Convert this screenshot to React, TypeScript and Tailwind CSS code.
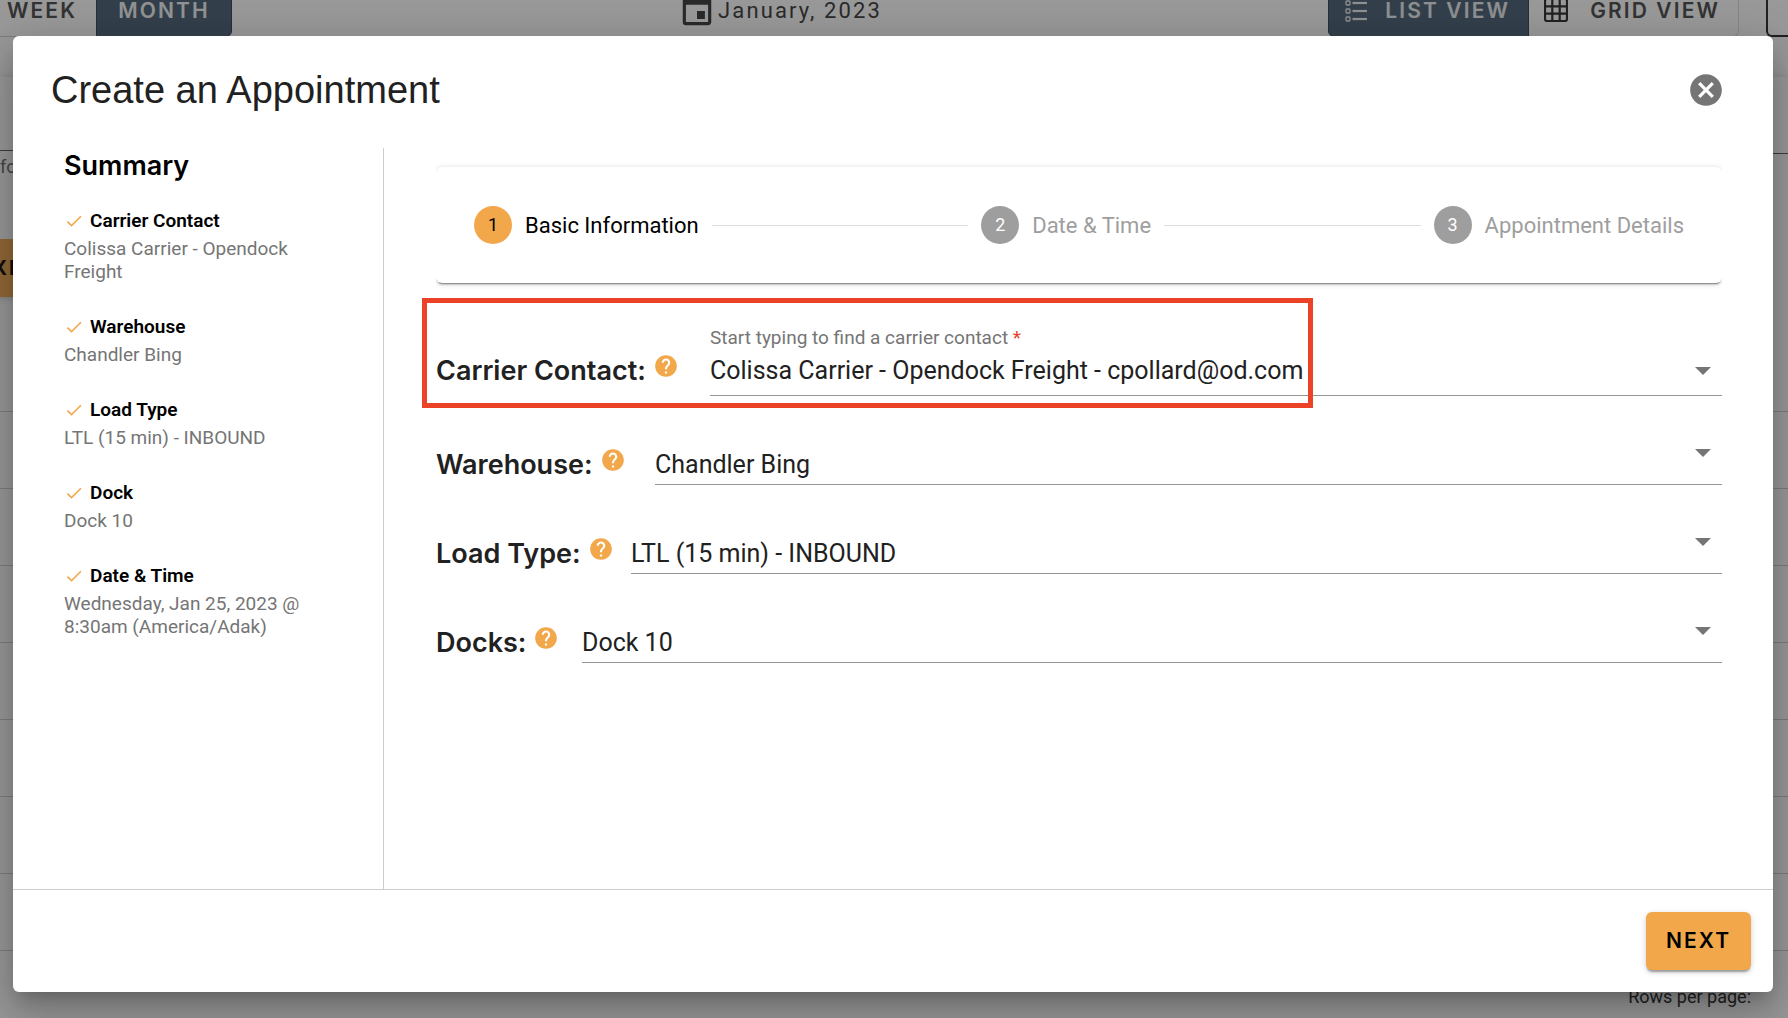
import React from "react";
import { MdCancel, MdCheck, MdEvent, MdHelp } from "react-icons/md";

const summary = [
  { title: "Carrier Contact", value: "Colissa Carrier - Opendock Freight" },
  { title: "Warehouse", value: "Chandler Bing" },
  { title: "Load Type", value: "LTL (15 min) - INBOUND" },
  { title: "Dock", value: "Dock 10" },
  { title: "Date & Time", value: "Wednesday, Jan 25, 2023 @ 8:30am (America/Adak)" },
];

const steps = ["Basic Information", "Date & Time", "Appointment Details"];

const selects = [
  { id: "warehouse", label: "Warehouse:", value: "Chandler Bing", width: "w-[219px]" },
  { id: "load-type", label: "Load Type:", value: "LTL (15 min) - INBOUND", width: "w-[195px]" },
  { id: "docks", label: "Docks:", value: "Dock 10", width: "w-[146px]" },
];

function ListIcon() {
  return (
    <svg viewBox="0 0 22 22" className="size-[22px]" fill="none" stroke="currentColor">
      {[3, 11, 19].map((y) => (
        <g key={y}>
          <rect x="1" y={y - 2} width="4" height="4" rx="1" strokeWidth="1.3" />
          <path d={`M7.500 ${y}H22`} strokeWidth="2.200" />
        </g>
      ))}
    </svg>
  );
}

function GridIcon() {
  return (
    <svg viewBox="0 0 24 24" className="size-6 text-[#222]" fill="none" stroke="currentColor" strokeWidth="2.200">
      <rect x="1" y="1" width="22" height="22" rx="2" />
      <path d="M8.300 1v22M15.700 1v22M1 8.300h22M1 15.700h22" />
    </svg>
  );
}

function Caret() {
  return (
    <svg viewBox="0 0 16 8" className="pointer-events-none mr-[11px] h-2 w-4 shrink-0" fill="#757575">
      <path d="M0 0h16L8 8z" />
    </svg>
  );
}

function FieldLabel({ id, label, width }: { id: string; label: string; width: string }) {
  return (
    <div className={`flex shrink-0 items-start gap-[7px] pb-0.5 ${width}`}>
      <label
        htmlFor={id}
        className="font-['Inter'] text-[27px] leading-9 font-semibold whitespace-nowrap text-[#212121]"
      >
        {label}
      </label>
      <button type="button" aria-label={`Help for ${label}`} className="text-[#f2a74b]">
        <MdHelp size={26} />
      </button>
    </div>
  );
}

function PageBehind() {
  return (
    <div className="absolute inset-0 flex flex-col overflow-hidden" aria-hidden="true">
      <div className="-mt-4 flex h-[53px] shrink-0 font-['Inter'] text-[21px] leading-none font-semibold tracking-widest text-[#444]">
        <button type="button" tabIndex={-1} className="w-24 border-b border-[#ccc] pl-[7px] text-left">
          WEEK
        </button>
        <button type="button" tabIndex={-1} className="w-[136px] rounded-br-md border border-[#2c3e50] bg-[#435c71] text-white/95">
          MONTH
        </button>
        <div className="flex flex-1 items-center justify-center gap-0.5 font-['Roboto'] text-[22px] font-normal text-[#333]">
          <MdEvent size={38} />
          <span>January, 2023</span>
        </div>
        <button type="button" tabIndex={-1} className="flex w-[201px] items-center justify-between rounded-bl-md border border-[#2c3e50] bg-[#435c71] pr-[18px] pl-4 text-white/90">
          <ListIcon />
          LIST VIEW
        </button>
        <button type="button" tabIndex={-1} className="mr-[27px] flex w-[210px] items-center justify-between rounded-br-md border-r border-b border-[#ddd] pr-[18px] pl-[15px]">
          <GridIcon />
          GRID VIEW
        </button>
        <div className="w-[22px] rounded-bl-md border-b-2 border-l-2 border-[#222]" />
      </div>
      <div className="mt-10 flex flex-1 flex-col shadow-[0_0_8px_rgba(0,0,0,0.15)]">
        <div className="flex h-[162px] shrink-0 items-start justify-between">
          <div className="h-[74px] w-10 border-b border-[#555]">
            <div className="pt-[76px] font-['Roboto'] text-lg text-[#666]">for</div>
          </div>
          <div className="h-[77px] w-10 border-b border-[#555]" />
        </div>
        <button type="button" tabIndex={-1} className="-ml-[42px] h-[58px] w-40 shrink-0 rounded-md bg-[#f2a74b] pl-5 text-left font-['Inter'] text-xl font-bold tracking-widest text-black shadow-md">
          EXPORT
        </button>
        <div className="mt-[38px] shrink-0">
          {[0, 1, 2, 3, 4, 5, 6, 7].map((row) => (
            <div key={row} className="h-[77px] border-b border-[#ccc]" />
          ))}
        </div>
        <div className="pt-[34px] pr-[37px] text-right font-['Roboto'] text-lg leading-6 text-[#222]">Rows per page:</div>
      </div>
    </div>
  );
}

function Summary() {
  return (
    <aside className="w-80 shrink-0 border-r border-[#ccc] pr-14">
      <h2 className="font-['Inter'] text-[27px] leading-9 font-semibold text-black">Summary</h2>
      <dl className="mt-[25px] flex flex-col gap-8 text-[19px] leading-[23px]">
        {summary.map((item) => (
          <div key={item.title}>
            <dt className="mb-[5px] flex items-center gap-1.5 font-semibold text-black">
              <MdCheck size={20} className="text-[#f2a74b]" />
              {item.title}
            </dt>
            <dd className="text-[#757575]">{item.value}</dd>
          </div>
        ))}
      </dl>
    </aside>
  );
}

function Stepper() {
  return (
    <div className="-mt-2.5 overflow-hidden py-2.5">
      <ol className="flex items-center gap-[13px] rounded-md px-[38px] py-[39px] text-[22px] shadow-[0_3px_2px_-2px_rgba(0,0,0,0.5),0_1px_6px_rgba(0,0,0,0.16)]">
        {steps.map((step, i) => (
          <React.Fragment key={step}>
            {i > 0 && <li aria-hidden="true" className="h-px flex-1 bg-[#dcdcdc]" />}
            <li className="flex items-center gap-[13px]">
              <span
                className={
                  i === 0
                    ? "flex size-[38px] items-center justify-center rounded-full bg-[#f2a74b] text-lg text-black"
                    : "flex size-[38px] items-center justify-center rounded-full bg-[#9e9e9e] text-lg text-white"
                }
              >
                {i + 1}
              </span>
              <span className={i === 0 ? "text-black" : "text-[#9e9e9e]"}>{step}</span>
            </li>
          </React.Fragment>
        ))}
      </ol>
    </div>
  );
}

export default function App() {
  return (
    <div className="relative h-screen overflow-hidden bg-white">
      <PageBehind />
      <div className="absolute inset-0 flex bg-[#212121]/46 pt-9 pr-[15px] pb-[26px] pl-[13px]">
        <div
          role="dialog"
          aria-modal="true"
          aria-labelledby="dialog-title"
          className="flex flex-1 flex-col rounded-md bg-white font-['Roboto'] shadow-[0_11px_15px_-7px_rgba(0,0,0,0.2),0_24px_38px_3px_rgba(0,0,0,0.14),0_9px_46px_8px_rgba(0,0,0,0.12)]"
        >
          <header className="flex h-28 shrink-0 items-center justify-between pr-12 pb-1 pl-[38px]">
            <h1 id="dialog-title" className="font-['Liberation_Sans'] text-[38px] text-[#212121]">
              Create an Appointment
            </h1>
            <button type="button" aria-label="Close" className="text-[#757575]">
              <MdCancel size={38} />
            </button>
          </header>

          <div className="flex min-h-0 flex-1 border-b border-[#ccc] px-[51px]">
            <Summary />
            <main className="min-w-0 flex-1 pt-[19px] pl-[52px]">
              <Stepper />
              <div className="relative mt-[5px] flex items-end text-[25px] leading-8 text-[#212121]">
                <div className="pb-[5px]">
                  <FieldLabel id="carrier-contact" label="Carrier Contact:" width="w-[274px]" />
                </div>
                <div className="flex h-[98px] flex-1 flex-col justify-end border-b border-[#949494] pb-2">
                  <label htmlFor="carrier-contact" className="mb-[3px] text-[19px] leading-7 text-[#757575]">
                    Start typing to find a carrier contact <span className="text-[#e5412d]">*</span>
                  </label>
                  <div className="flex items-center">
                    <input
                      id="carrier-contact"
                      type="text"
                      required
                      defaultValue="Colissa Carrier - Opendock Freight - cpollard@od.com"
                      className="h-8 min-w-0 flex-1 bg-transparent outline-none"
                    />
                    <Caret />
                  </div>
                </div>
                <div className="pointer-events-none absolute top-0 -left-3.5 h-[110px] w-[891px] border-5 border-[#ec4228]" />
              </div>
              {selects.map((field) => (
                <div key={field.id} className="mt-[51px] flex items-end text-[25px] leading-8 text-[#212121]">
                  <FieldLabel id={field.id} label={field.label} width={field.width} />
                  <div className="flex h-[36px] flex-1 items-start border-b border-[#949494]">
                    <select id={field.id} className="h-8 min-w-0 flex-1 appearance-none bg-transparent outline-none">
                      <option>{field.value}</option>
                    </select>
                    <Caret />
                  </div>
                </div>
              ))}
            </main>
          </div>

          <footer className="flex shrink-0 justify-end p-[22px]">
            <button
              type="button"
              className="h-[58px] w-[105px] rounded-md bg-[#f2a74b] font-['Inter'] text-[21px] font-semibold tracking-widest text-black shadow-[0_3px_2px_-1px_rgba(0,0,0,0.3),0_2px_6px_rgba(0,0,0,0.18)]"
            >
              NEXT
            </button>
          </footer>
        </div>
      </div>
    </div>
  );
}
